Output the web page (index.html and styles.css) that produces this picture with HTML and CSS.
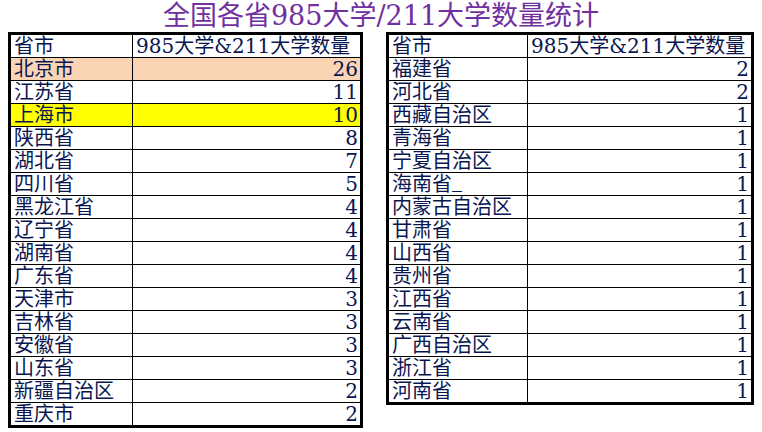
FILE: index.html
```html
<!DOCTYPE html>
<html lang="zh-CN">
<head>
<meta charset="utf-8">
<title>全国各省985大学/211大学数量统计</title>
<link rel="stylesheet" href="styles.css">
</head>
<body>
<h1 class="title">全国各省985大学/211大学数量统计</h1>
<div class="tables">
  <table class="stat stat-left">
    <colgroup><col class="c-name"><col></colgroup>
    <tr><td>省市</td><td>985大学&amp;211大学数量</td></tr>
    <tr class="peach"><td>北京市</td><td class="num">26</td></tr>
    <tr><td>江苏省</td><td class="num">11</td></tr>
    <tr class="yellow"><td>上海市</td><td class="num">10</td></tr>
    <tr><td>陕西省</td><td class="num">8</td></tr>
    <tr><td>湖北省</td><td class="num">7</td></tr>
    <tr><td>四川省</td><td class="num">5</td></tr>
    <tr><td>黑龙江省</td><td class="num">4</td></tr>
    <tr><td>辽宁省</td><td class="num">4</td></tr>
    <tr><td>湖南省</td><td class="num">4</td></tr>
    <tr><td>广东省</td><td class="num">4</td></tr>
    <tr><td>天津市</td><td class="num">3</td></tr>
    <tr><td>吉林省</td><td class="num">3</td></tr>
    <tr><td>安徽省</td><td class="num">3</td></tr>
    <tr><td>山东省</td><td class="num">3</td></tr>
    <tr><td>新疆自治区</td><td class="num">2</td></tr>
    <tr><td>重庆市</td><td class="num">2</td></tr>
  </table>
  <table class="stat stat-right">
    <colgroup><col class="c-name"><col></colgroup>
    <tr><td>省市</td><td>985大学&amp;211大学数量</td></tr>
    <tr><td>福建省</td><td class="num">2</td></tr>
    <tr><td>河北省</td><td class="num">2</td></tr>
    <tr><td>西藏自治区</td><td class="num">1</td></tr>
    <tr><td>青海省</td><td class="num">1</td></tr>
    <tr><td>宁夏自治区</td><td class="num">1</td></tr>
    <tr><td>海南省<span class="us">_</span></td><td class="num">1</td></tr>
    <tr><td>内蒙古自治区</td><td class="num">1</td></tr>
    <tr><td>甘肃省</td><td class="num">1</td></tr>
    <tr><td>山西省</td><td class="num">1</td></tr>
    <tr><td>贵州省</td><td class="num">1</td></tr>
    <tr><td>江西省</td><td class="num">1</td></tr>
    <tr><td>云南省</td><td class="num">1</td></tr>
    <tr><td>广西自治区</td><td class="num">1</td></tr>
    <tr><td>浙江省</td><td class="num">1</td></tr>
    <tr><td>河南省</td><td class="num">1</td></tr>
  </table>
</div>
</body>
</html>
```
FILE: styles.css
```css
html, body {
  margin: 0;
  padding: 0;
  background: #ffffff;
}
body {
  width: 762px;
  height: 432px;
  overflow: hidden;
  font-family: "DejaVu Serif", "Noto Sans CJK SC", serif;
}
.title {
  margin: 0;
  height: 32px;
  line-height: 32px;
  text-align: center;
  font-size: 27px;
  font-weight: normal;
  color: #7030a0;
  white-space: nowrap;
}
.tables {
  display: flex;
  align-items: flex-start;
  gap: 23px;
  padding-left: 8px;
}
.stat {
  border-collapse: collapse;
  border: 3px solid #000;
  color: #0a1650;
  font-size: 20px;
  table-layout: fixed;
}
.stat td {
  border: 1px solid #000;
  height: 22px;
  line-height: 22px;
  padding: 0 0 0 3px;
  white-space: nowrap;
}
.stat td.num {
  text-align: right;
  padding: 0 2px 0 0;
}
.stat .us {
  line-height: 0;
  vertical-align: 4px;
}
.stat-left {
  width: 355px;
}
.stat-left .c-name {
  width: 123px;
}
.stat-right {
  width: 368px;
}
.stat-right .c-name {
  width: 140px;
}
.peach td {
  background: #fbd4b4;
}
.yellow td {
  background: #ffff00;
}
```
